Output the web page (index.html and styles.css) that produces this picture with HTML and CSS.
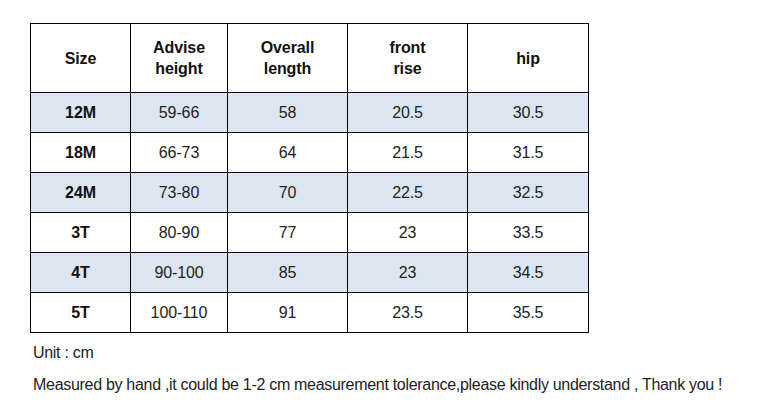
FILE: index.html
```html
<!DOCTYPE html>
<html>
<head>
<meta charset="utf-8">
<link rel="stylesheet" href="styles.css">
</head>
<body>
<div class="page">
  <table class="size-table">
    <colgroup>
      <col class="c1"><col class="c2"><col class="c3"><col class="c4"><col class="c5">
    </colgroup>
    <thead>
      <tr>
        <th>Size</th>
        <th>Advise<br>height</th>
        <th>Overall<br>length</th>
        <th>front<br>rise</th>
        <th>hip</th>
      </tr>
    </thead>
    <tbody>
      <tr class="shade"><th>12M</th><td>59-66</td><td>58</td><td>20.5</td><td>30.5</td></tr>
      <tr><th>18M</th><td>66-73</td><td>64</td><td>21.5</td><td>31.5</td></tr>
      <tr class="shade"><th>24M</th><td>73-80</td><td>70</td><td>22.5</td><td>32.5</td></tr>
      <tr><th>3T</th><td>80-90</td><td>77</td><td>23</td><td>33.5</td></tr>
      <tr class="shade"><th>4T</th><td>90-100</td><td>85</td><td>23</td><td>34.5</td></tr>
      <tr><th>5T</th><td>100-110</td><td>91</td><td>23.5</td><td>35.5</td></tr>
    </tbody>
  </table>
  <p class="unit">Unit : cm</p>
  <p class="note">Measured by hand ,it could be 1-2 cm measurement tolerance,please kindly understand , Thank you !</p>
</div>
</body>
</html>
```
FILE: styles.css
```css
html, body {
  margin: 0;
  padding: 0;
  background: #ffffff;
}
body {
  width: 768px;
  height: 409px;
  overflow: hidden;
  font-family: "Liberation Sans", Arial, sans-serif;
  color: #1a1a1a;
}
.page {
  padding: 23px 0 0 30px;
}
.size-table {
  border-collapse: collapse;
  table-layout: fixed;
  width: 558px;
}
.c1 { width: 100px; }
.c2 { width: 97px; }
.c3 { width: 120px; }
.c4 { width: 120px; }
.c5 { width: 121px; }
.size-table th,
.size-table td {
  border: 1px solid #000;
  text-align: center;
  vertical-align: middle;
  padding: 0;
  font-size: 16px;
  letter-spacing: -0.1px;
}
.size-table th {
  font-weight: bold;
  color: #111;
}
.size-table td {
  font-weight: normal;
  color: #222;
}
.size-table thead th {
  height: 68px;
  line-height: 21px;
}
.size-table tbody tr {
  height: 40px;
}
.size-table tbody th,
.size-table tbody td {
  height: 39px;
}
.size-table tr.shade th,
.size-table tr.shade td {
  background: #dce6f1;
}
.unit {
  margin: 10px 0 0 3px;
  font-size: 16px;
  letter-spacing: -0.3px;
  line-height: 19px;
  color: #222;
}
.note {
  margin: 13px 0 0 3px;
  font-size: 16px;
  letter-spacing: -0.3px;
  line-height: 19px;
  color: #222;
}
```
